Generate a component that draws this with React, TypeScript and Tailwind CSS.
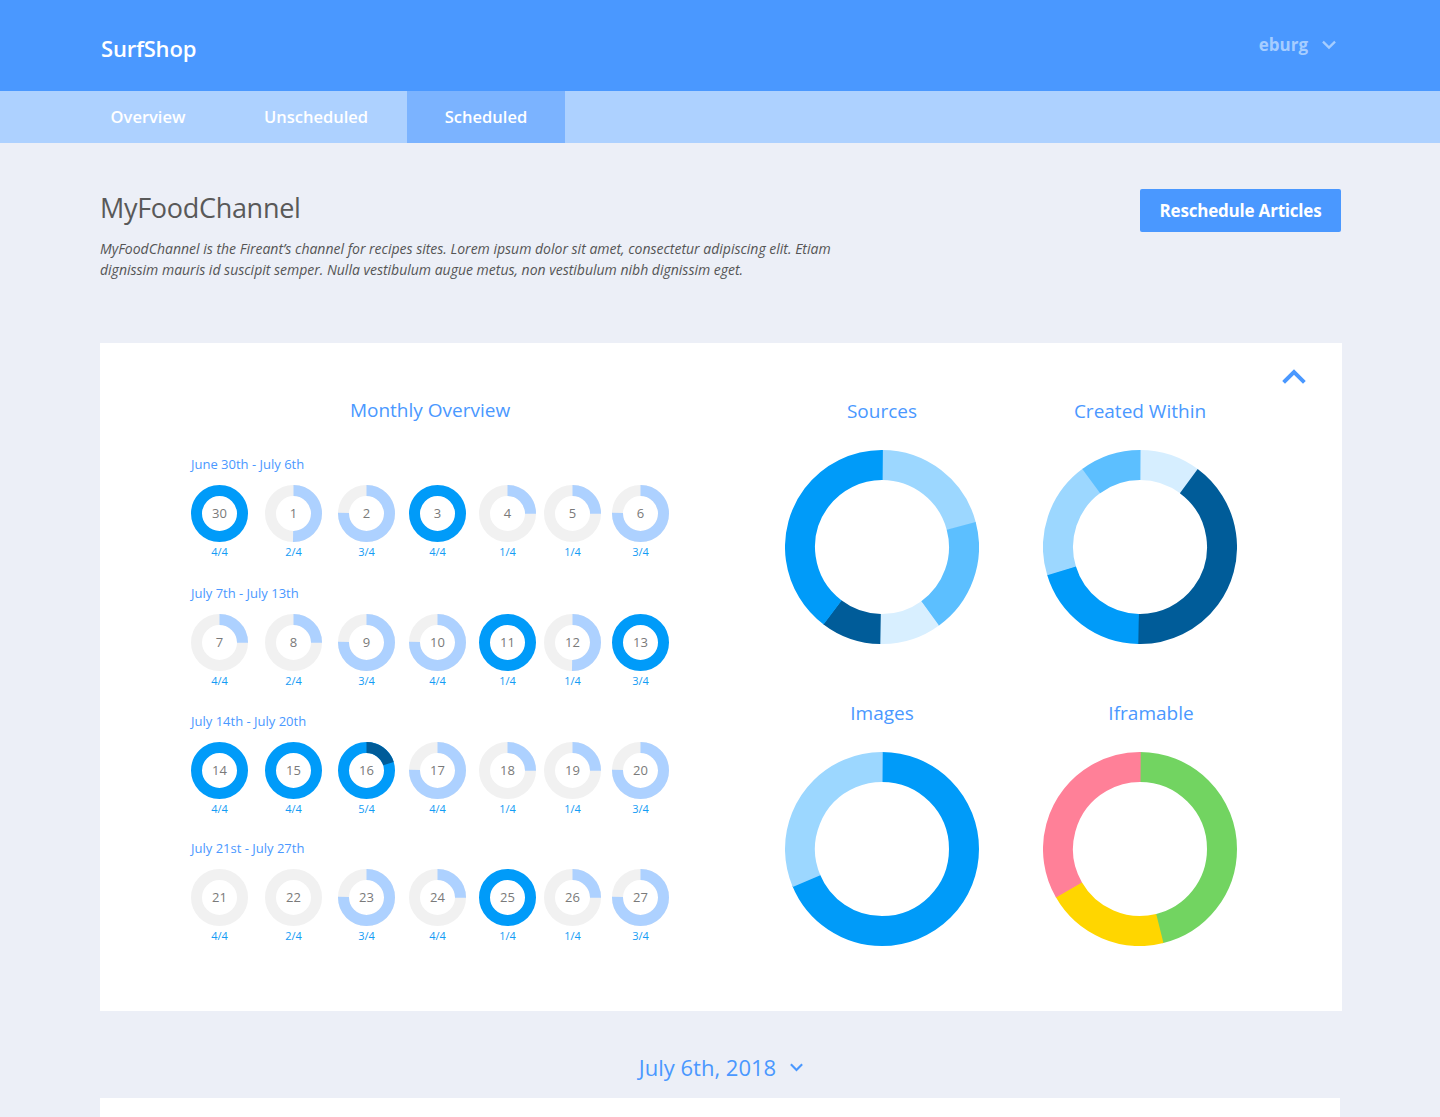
import React from "react";

type Ring = { day: number; frac: string; kind: "full" | "over" | "part"; p?: number };

const weeks: { label: string; gap: string; days: Ring[] }[] = [
  {
    label: "June 30th - July 6th",
    gap: "",
    days: [
      { day: 30, frac: "4/4", kind: "full" },
      { day: 1, frac: "2/4", kind: "part", p: 0.5 },
      { day: 2, frac: "3/4", kind: "part", p: 0.75 },
      { day: 3, frac: "4/4", kind: "full" },
      { day: 4, frac: "1/4", kind: "part", p: 0.25 },
      { day: 5, frac: "1/4", kind: "part", p: 0.25 },
      { day: 6, frac: "3/4", kind: "part", p: 0.75 },
    ],
  },
  {
    label: "July 7th - July 13th",
    gap: "mt-[25px]",
    days: [
      { day: 7, frac: "4/4", kind: "part", p: 0.25 },
      { day: 8, frac: "2/4", kind: "part", p: 0.25 },
      { day: 9, frac: "3/4", kind: "part", p: 0.75 },
      { day: 10, frac: "4/4", kind: "part", p: 0.75 },
      { day: 11, frac: "1/4", kind: "full" },
      { day: 12, frac: "1/4", kind: "part", p: 0.5 },
      { day: 13, frac: "3/4", kind: "full" },
    ],
  },
  {
    label: "July 14th - July 20th",
    gap: "mt-[24px]",
    days: [
      { day: 14, frac: "4/4", kind: "full" },
      { day: 15, frac: "4/4", kind: "full" },
      { day: 16, frac: "5/4", kind: "over" },
      { day: 17, frac: "4/4", kind: "part", p: 0.75 },
      { day: 18, frac: "1/4", kind: "part", p: 0.25 },
      { day: 19, frac: "1/4", kind: "part", p: 0.25 },
      { day: 20, frac: "3/4", kind: "part", p: 0.75 },
    ],
  },
  {
    label: "July 21st - July 27th",
    gap: "mt-[23px]",
    days: [
      { day: 21, frac: "4/4", kind: "part", p: 0 },
      { day: 22, frac: "2/4", kind: "part", p: 0 },
      { day: 23, frac: "3/4", kind: "part", p: 0.75 },
      { day: 24, frac: "4/4", kind: "part", p: 0.25 },
      { day: 25, frac: "1/4", kind: "full" },
      { day: 26, frac: "1/4", kind: "part", p: 0.25 },
      { day: 27, frac: "3/4", kind: "part", p: 0.75 },
    ],
  },
];

type Seg = { from: number; to: number; color: string };

const charts: { title: string; shift?: boolean; segs: Seg[] }[] = [
  {
    title: "Sources",
    segs: [
      { from: 0, to: 75, color: "#9CD7FF" },
      { from: 75, to: 144, color: "#5CBFFF" },
      { from: 144, to: 181, color: "#D8EFFF" },
      { from: 181, to: 217, color: "#005C99" },
      { from: 217, to: 360, color: "#009BF9" },
    ],
  },
  {
    title: "Created Within",
    segs: [
      { from: 0, to: 36.5, color: "#D6EEFF" },
      { from: 36.5, to: 181, color: "#005C99" },
      { from: 181, to: 253, color: "#009BF9" },
      { from: 253, to: 323.5, color: "#9CD7FF" },
      { from: 323.5, to: 360, color: "#5CBFFF" },
    ],
  },
  {
    title: "Images",
    segs: [
      { from: 0, to: 247, color: "#009BF9" },
      { from: 247, to: 360, color: "#9CD7FF" },
    ],
  },
  {
    title: "Iframable",
    shift: true,
    segs: [
      { from: 0, to: 166, color: "#72D461" },
      { from: 166, to: 240, color: "#FFD600" },
      { from: 240, to: 360, color: "#FF8098" },
    ],
  },
];

function Chevron({ up = false, className = "" }: { up?: boolean; className?: string }) {
  return (
    <svg viewBox="0 0 16 10" className={className} fill="none">
      <polyline
        points={up ? "2,8 8,2 14,8" : "2,2 8,8 14,2"}
        stroke="currentColor"
        strokeWidth="2.6"
        strokeLinecap="square"
      />
    </svg>
  );
}

function DayRing({ ring }: { ring: Ring }) {
  const r = 23;
  const c = 2 * Math.PI * r;
  return (
    <div className="flex flex-col items-center w-[57px]">
      <div className="grid place-items-center w-[57px] h-[57px]">
        <svg width="57" height="57" viewBox="0 0 57 57" className="[grid-area:1/1]">
          {ring.kind === "part" ? (
            <>
              <circle cx="28.5" cy="28.5" r={r} fill="none" stroke="#F1F1F1" strokeWidth="11" />
              {ring.p ? (
                <circle
                  cx="28.5"
                  cy="28.5"
                  r={r}
                  fill="none"
                  stroke="#ADD1FF"
                  strokeWidth="11"
                  strokeDasharray={`${(ring.p ?? 0) * c} ${c}`}
                  transform="rotate(-90 28.5 28.5)"
                />
              ) : null}
            </>
          ) : (
            <>
              <circle cx="28.5" cy="28.5" r={r} fill="none" stroke="#009BF9" strokeWidth="11" />
              {ring.kind === "over" && (
                <circle
                  cx="28.5"
                  cy="28.5"
                  r={r}
                  fill="none"
                  stroke="#005C99"
                  strokeWidth="11"
                  strokeDasharray={`${0.2 * c} ${c}`}
                  transform="rotate(-90 28.5 28.5)"
                />
              )}
            </>
          )}
        </svg>
        <span className="[grid-area:1/1] text-[13px] text-[#7a7a7a] leading-none">{ring.day}</span>
      </div>
      <span className="mt-[3px] text-[11px] leading-[14px] text-[#149CF4]">{ring.frac}</span>
    </div>
  );
}

function Donut({ segs }: { segs: Seg[] }) {
  const r = 82;
  const c = 2 * Math.PI * r;
  return (
    <svg width="194" height="194" viewBox="0 0 194 194">
      {segs.map((s, i) => (
        <circle
          key={i}
          cx="97"
          cy="97"
          r={r}
          fill="none"
          stroke={s.color}
          strokeWidth="30"
          strokeDasharray={`${((s.to - s.from) / 360) * c + 0.4} ${c}`}
          transform={`rotate(${-90 + s.from} 97 97)`}
        />
      ))}
    </svg>
  );
}

export default function App() {
  return (
    <div className="min-h-screen bg-[#ECEFF7] font-['Open_Sans',sans-serif]">
      {/* Top bar */}
      <header className="h-[91px] bg-[#4A98FF] flex items-center justify-between pl-[101px] pr-[104px]">
        <span className="mt-[6px] text-white text-[22px] font-semibold tracking-[-0.2px]">SurfShop</span>
        <div className="flex items-center gap-[14px] text-[#A6CDFF] -mt-[1px]">
          <span className="text-[17px] font-bold">eburg</span>
          <Chevron className="w-[14px] h-[10px]" />
        </div>
      </header>

      {/* Tabs */}
      <nav className="h-[52px] bg-[#ADD1FF] flex pl-[71px]">
        <div className="w-[154px] flex items-center justify-center text-white text-[16.5px] font-semibold">Overview</div>
        <div className="w-[182px] flex items-center justify-center text-white text-[16.5px] font-semibold">Unscheduled</div>
        <div className="w-[158px] flex items-center justify-center text-white text-[16.5px] font-semibold bg-[#7BB3FF]">Scheduled</div>
      </nav>

      <main className="ml-[100px] w-[1242px] pt-[46px]">
        <div className="flex justify-between items-start">
          <div>
            <h1 className="text-[27px] leading-[34px] text-[#595959] tracking-[-0.3px] mt-[2px]">MyFoodChannel</h1>
            <p className="mt-[13px] text-[14px] leading-[21px] italic text-[#555]">
              MyFoodChannel is the Fireant’s channel for recipes sites. Lorem ipsum dolor sit amet, consectetur adipiscing elit. Etiam
              <br />
              dignissim mauris id suscipit semper. Nulla vestibulum augue metus, non vestibulum nibh dignissim eget.
            </p>
          </div>
          <button className="mr-[1px] h-[43px] w-[201px] bg-[#4A98FF] rounded-[2px] text-white text-[17px] font-bold tracking-[-0.2px]">
            Reschedule Articles
          </button>
        </div>

        {/* Overview card */}
        <section className="mt-[63px] bg-white h-[668px] pt-[26px]">
          <div className="flex justify-end pr-[36px]">
            <button className="text-[#4A98FF]">
              <Chevron up className="w-[24px] h-[15px]" />
            </button>
          </div>
          <div className="flex mt-[13px]">
            <div className="ml-[91px] w-[478px]">
              <h2 className="text-center text-[19px] leading-[26px] text-[#4A98FF]">Monthly Overview</h2>
              <div className="mt-[32px] flex flex-col">
                {weeks.map((w) => (
                  <div key={w.label} className={w.gap}>
                    <div className="text-[13px] leading-[18px] text-[#4A98FF]">{w.label}</div>
                    <div className="mt-[12px] grid grid-cols-[74px_73px_71px_70px_65px_68px_57px]">
                      {w.days.map((d) => (
                        <DayRing key={d.day} ring={d} />
                      ))}
                    </div>
                  </div>
                ))}
              </div>
            </div>
            <div className="ml-[116px] grid grid-cols-[194px_194px] gap-x-[64px] gap-y-[55px]">
              {charts.map((ch) => (
                <div key={ch.title} className="flex flex-col items-center">
                  <h3 className={`text-[19px] leading-[26px] text-[#4A98FF] mt-[1px] ${ch.shift ? "ml-[22px]" : ""}`}>
                    {ch.title}
                  </h3>
                  <div className="mt-[26px]">
                    <Donut segs={ch.segs} />
                  </div>
                </div>
              ))}
            </div>
          </div>
        </section>

        <div className="mt-[41px] flex items-center justify-center gap-[14px] text-[#4A98FF]">
          <span className="text-[22px] leading-[30px]">July 6th, 2018</span>
          <Chevron className="w-[13px] h-[9px]" />
        </div>
      </main>
      <div className="mt-[16px] ml-[100px] w-[1240px] h-[40px] bg-white" />
    </div>
  );
}
